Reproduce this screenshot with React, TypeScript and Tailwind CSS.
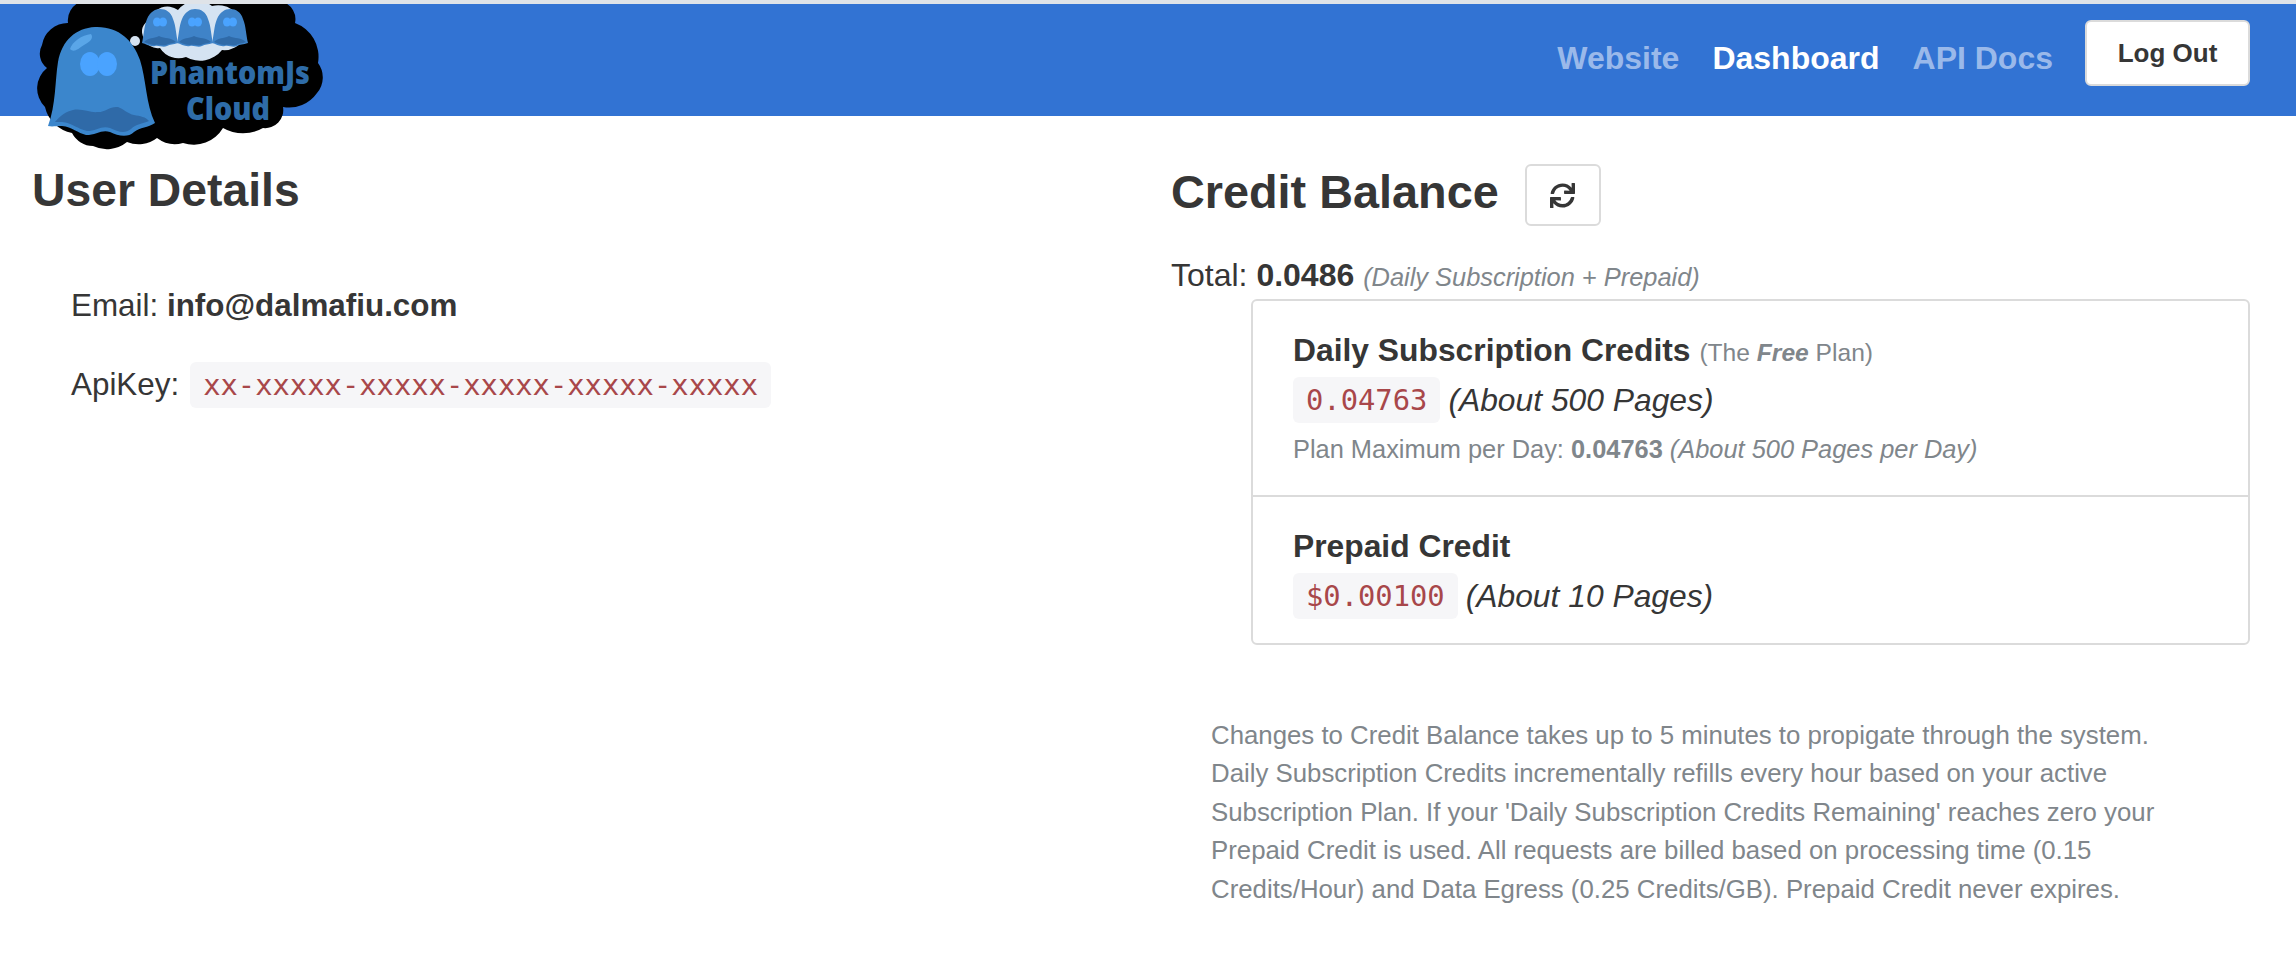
import React from "react";
import { FaSync } from "react-icons/fa";

const sans = "font-['Liberation_Sans',Arial,sans-serif]";
const mono = "font-['DejaVu_Sans_Mono',monospace]";

function MiniGhost({ x }: { x: number }) {
  return (
    <g transform={`translate(${x} 9)`}>
      <path d="M0 34C2 26 2 17 5 10C8 3 13 0 18 0C24 0 29 3 31 10C34 17 34 26 36 34C31 36 28 35 25 37C21 39 17 36 13 37C8 38 4 35 0 34Z" fill="#3f83c8" />
      <path d="M2 33C7 28 11 30 17 27C23 30 29 28 34 33C30 35 27 34 24 36C21 37 17 35 13 36C9 36 5 34 2 33Z" fill="#2f6aa8" />
      <ellipse cx="15" cy="13" rx="4" ry="4.5" fill="#4aa3ff" />
      <ellipse cx="21" cy="13" rx="4" ry="4.5" fill="#4aa3ff" />
    </g>
  );
}

function Logo() {
  return (
    <svg width="330" height="150" viewBox="0 4 330 150" className="absolute left-0 top-[4px]">
      <path
        d="M80 2L283 2A18 18 0 0 1 295 23A36 36 0 0 1 318 63A24 24 0 0 1 317 93A34 34 0 0 1 283 107A18 18 0 0 1 263 128A40 40 0 0 1 223 128A34 34 0 0 1 183 143A30 30 0 0 1 157 138A30 30 0 0 1 127 142A32 32 0 0 1 93 146A24 24 0 0 1 72 133A34 34 0 0 1 45 107A26 26 0 0 1 47 68A18 18 0 0 1 42 45A26 26 0 0 1 68 23A20 20 0 0 1 80 2Z"
        fill="#000"
      />
      <path
        d="M150 20A18 18 0 0 1 178 10A24 24 0 0 1 212 6A24 24 0 0 1 242 26A11 11 0 0 1 244 38A22 22 0 0 1 222 50A28 28 0 0 1 186 57A22 22 0 0 1 160 48A14 14 0 0 1 144 38A12 12 0 0 1 150 20Z"
        fill="#d5e3f2"
      />
      <circle cx="135" cy="41" r="5" fill="#d5e3f2" />
      <circle cx="126" cy="43" r="3" fill="#d5e3f2" />
      <circle cx="120" cy="44" r="1.2" fill="#d5e3f2" />
      <MiniGhost x={142} />
      <MiniGhost x={177} />
      <MiniGhost x={212} />
      <path d="M48 126C56 105 55 80 58 62C62 40 76 28 95 27C118 26 133 40 140 60C146 78 146 105 155 123C148 128 140 127 134 132C128 138 118 136 110 132C102 129 96 135 86 135C78 133 72 127 62 126C56 126 52 127 48 126Z" fill="#3b86cc" />
      <path d="M55 122C62 114 66 112 73 110C82 108 90 113 98 112C106 112 110 106 118 107C124 109 128 114 134 115C140 116 146 117 149 121C142 124 136 124 131 129C125 134 118 132 110 128C102 125 96 131 87 131C78 129 72 123 62 122Z" fill="#2f6aa8" />
      <path d="M70 49C72 42 82 35 91 34C94 38 90 42 84 45C78 49 74 53 70 49Z" fill="#5aa6e8" />
      <ellipse cx="90" cy="64" rx="10" ry="12" fill="#4aa3ff" />
      <ellipse cx="107" cy="64" rx="10" ry="12" fill="#4aa3ff" />
      <text x="230" y="84" textAnchor="middle" fill="#2e6ca8" fontSize="31" fontWeight="800" fontFamily="Open Sans, sans-serif" textLength="160" lengthAdjust="spacingAndGlyphs">PhantomJs</text>
      <text x="228" y="120" textAnchor="middle" fill="#2e6ca8" fontSize="32" fontWeight="800" fontFamily="Open Sans, sans-serif" textLength="84" lengthAdjust="spacingAndGlyphs">Cloud</text>
    </svg>
  );
}

export default function App() {
  return (
    <div className={`${sans} relative min-h-[958px] overflow-hidden bg-white text-[#363636]`}>
      <div className="h-[4px] bg-[#dfe3e8]" />
      <header className="flex h-[112px] items-start justify-end bg-[#3273d3] pr-[46px]">
        <nav className="mt-[33px] flex gap-[33px] text-[32px] font-bold leading-[42px]">
          <a className="text-[#9ab9ea]">Website</a>
          <a className="text-white">Dashboard</a>
          <a className="text-[#9ab9ea]">API Docs</a>
        </nav>
        <button className="ml-[32px] mt-[16px] h-[66px] w-[165px] rounded-[6px] border-2 border-[#dbdbdb] bg-white text-[26px] font-bold text-[#363636]">
          Log Out
        </button>
      </header>
      <Logo />
      <main className="flex pl-[32px] pr-[46px]">
        <section className="w-[1139px] shrink-0">
          <h1 className="mt-[47px] text-[46.3px] font-bold leading-[54px]">User Details</h1>
          <div className="pl-[39px]">
            <p className="mt-[67px] text-[31.4px] leading-[44px]">
              Email: <b>info@dalmafiu.com</b>
            </p>
            <p className="mt-[34px] flex items-center text-[31.4px] leading-[44px]">
              ApiKey:
              <code className={`${mono} ml-[11px] rounded-[6px] bg-[#f6f6f8] px-[13px] text-[28.8px] leading-[46px] text-[#a8474a]`}>
                xx-xxxxx-xxxxx-xxxxx-xxxxx-xxxxx
              </code>
            </p>
          </div>
        </section>
        <section className="min-w-0 flex-1">
          <div className="mt-[48px] flex items-center gap-[26px]">
            <h1 className="mb-[6px] text-[46.8px] font-bold leading-[54px]">Credit Balance</h1>
            <button className="flex h-[62px] w-[76px] items-center justify-center rounded-[6px] border-2 border-[#dbdbdb] bg-white text-[#363636]">
              <FaSync size={25} />
            </button>
          </div>
          <p className="mt-[29px] text-[32px] leading-[40px]">
            Total: <b>0.0486</b> <i className="text-[25.4px] text-[#80868b]">(Daily Subscription + Prepaid)</i>
          </p>
          <div className="ml-[80px] mt-[2px] rounded-[6px] border-2 border-[#dbdbdb]">
            <div className="border-b-2 border-[#dbdbdb] px-[40px] pb-[28px] pt-[29px]">
              <p className="text-[31.8px] leading-[40px]">
                <b>Daily Subscription Credits</b> <span className="text-[24.6px] text-[#80868b]">(The <b><i>Free</i></b> Plan)</span>
              </p>
              <p className="mt-[4px] flex items-center text-[31.8px] leading-[46px]">
                <code className={`${mono} rounded-[6px] bg-[#f6f6f8] px-[13px] text-[28.8px] text-[#a8474a]`}>0.04763</code>
                <i className="ml-[8px]">(About 500 Pages)</i>
              </p>
              <p className="mt-[8px] text-[25.4px] leading-[36px] text-[#80868b]">
                Plan Maximum per Day: <b>0.04763</b> <i>(About 500 Pages per Day)</i>
              </p>
            </div>
            <div className="px-[40px] pb-[24px] pt-[29px]">
              <p className="text-[31.8px] leading-[40px]"><b>Prepaid Credit</b></p>
              <p className="mt-[7px] flex items-center text-[31.8px] leading-[46px]">
                <code className={`${mono} rounded-[6px] bg-[#f6f6f8] px-[13px] text-[28.8px] text-[#a8474a]`}>$0.00100</code>
                <i className="ml-[8px]">(About 10 Pages)</i>
              </p>
            </div>
          </div>
          <p className="ml-[40px] mt-[71px] max-w-[985px] text-[25.8px] leading-[38.4px] text-[#80868b]">
            Changes to Credit Balance takes up to 5 minutes to propigate through the system. Daily Subscription Credits incrementally refills every hour based on your active Subscription Plan. If your 'Daily Subscription Credits Remaining' reaches zero your Prepaid Credit is used. All requests are billed based on processing time (0.15 Credits/Hour) and Data Egress (0.25 Credits/GB). Prepaid Credit never expires.
          </p>
        </section>
      </main>
    </div>
  );
}
